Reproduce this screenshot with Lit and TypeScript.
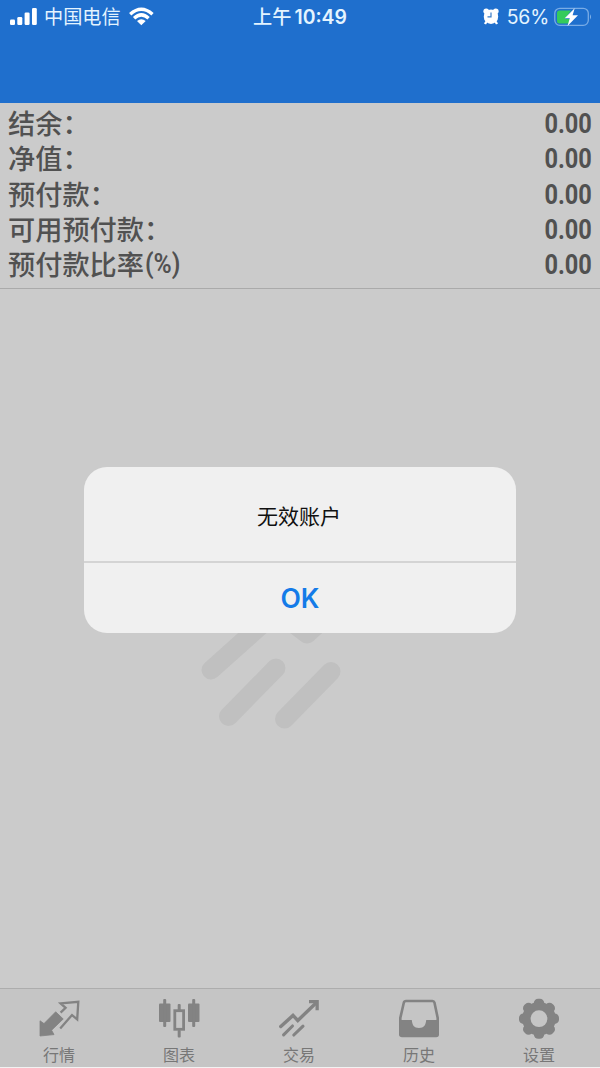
import { LitElement, html, svg, css } from "lit";
import { customElement, property } from "lit/decorators.js";

const icons: Record<string, unknown> = {
  quotes: svg`
    <path d="M1 21.8 5 24.6 16.7 12.8 24.2 20 12.6 31.2 15 35.6 1 37Z" fill="currentColor" stroke="currentColor" stroke-width=".8" stroke-linejoin="round"/>
    <path d="M21.6 13.6 26.6 8.8 21.6 4.3 39.3 2.8 38.2 20.4 33 16 21.2 29.6" fill="none" stroke="currentColor" stroke-width="2.3"/>`,
  charts: svg`
    <g fill="currentColor">
      <rect x="0" y="4.5" width="11.5" height="18.5" rx="1"/><rect x="4.2" y="0" width="3" height="28" rx="1"/>
      <rect x="29" y="4.5" width="11.5" height="18.5" rx="1"/><rect x="33.2" y="0" width="3" height="28" rx="1"/>
      <rect x="18.7" y="5" width="3" height="7" rx="1"/><rect x="18.7" y="31" width="3" height="7.5" rx="1"/>
    </g>
    <rect x="15.8" y="11.7" width="8.8" height="18.6" fill="none" stroke="currentColor" stroke-width="2.8"/>`,
  trade: svg`
    <g fill="none" stroke="currentColor" stroke-width="3.1" stroke-linecap="round">
      <path d="M1.8 27.5 14 16.4 18.8 21.5 37 4" stroke-width="3.4"/>
      <path d="M4.6 35.8 13.5 27M14.8 36 24 27.2"/>
    </g>
    <path d="M30 1H39.8V11.3H36.5V4.3H30Z" fill="currentColor"/>`,
  history: svg`
    <path d="M7 2H33.5Q35 2 35.5 3.7L38.7 19V35.5Q38.7 37 37.2 37H3Q1.3 37 1.3 35.5V19L4.8 3.7Q5.2 2 7 2Z" fill="none" stroke="currentColor" stroke-width="2.6"/>
    <path d="M1 21H12.8C13.2 26 15 29 20 29S26.8 26 27.2 21H39V37H1Z" fill="currentColor"/>`,
  settings: svg`
    <g fill="currentColor">
      ${[0, 45, 90, 135].map(
        (a) => svg`<rect x="14.8" y="-.3" width="10.4" height="40" rx="4.4" transform="rotate(${a} 20 19.7)"/>`
      )}
    </g>
    <circle cx="20" cy="19.7" r="12.8" fill="none" stroke="currentColor" stroke-width="8"/>
    <circle cx="20" cy="19.7" r="8.4" fill="#c5c5c5"/>`,
};

@customElement("status-bar")
class StatusBar extends LitElement {
  static styles = css`
    :host {
      display: grid;
      grid-template-columns: 1fr auto 1fr;
      align-items: center;
      height: 32px;
      padding: 0 9px 0 10px;
      color: #e4f4ff;
      font: 19.2px/34px Inter, "Noto Sans CJK SC", sans-serif;
    }
    .side { display: flex; align-items: center; }
    .right { justify-content: flex-end; }
    .carrier { margin: 0 8px 0 6px; }
    .time { display: flex; gap: 3px; margin-right: 1px; font-weight: 500; }
    .time b { font-weight: 600; font-size: 19.4px; }
    .battery { margin-left: 5px; }
    .percent { margin-left: 8px; font-size: 19.4px; letter-spacing: -0.2px; }
    svg { display: block; margin-top: -1px; }
  `;
  render() {
    return html`
      <div class="side">
        <svg width="28" height="18" fill="#fff">
          <rect x="0" y="11.5" width="5" height="5.5" rx="1.3"/><rect x="7.3" y="9" width="5" height="8" rx="1.3"/>
          <rect x="14.6" y="4.5" width="5" height="12.5" rx="1.3"/><rect x="22" y="0" width="4.8" height="17" rx="1.3"/>
        </svg>
        <span class="carrier">中国电信</span>
        <svg width="25" height="19" fill="none" stroke="#fff" stroke-width="3.4">
          <path d="M1.2 7.2Q12.3-2.8 23.5 7.2M5.1 11.2Q12.3 4.600 19.6 11.2"/>
          <path d="M8 14Q12.3 10.4 16.7 14L12.3 18.3Z" fill="#fff" stroke="none"/>
        </svg>
      </div>
      <div class="time"><span>上午</span><b>10:49</b></div>
      <div class="side right">
        <svg width="16" height="17">
          <g fill="#fff"><circle cx="3.2" cy="3.2" r="2.8"/><circle cx="12.8" cy="3.2" r="2.8"/><circle cx="8" cy="8.7" r="7.2"/></g>
          <path d="M3.5 13.500 2 16M12.5 13.5 14 16" stroke="#fff" stroke-width="2.4"/>
          <path d="M8 4.4V8.8H4.5" fill="none" stroke="#397cc8" stroke-width="1.2"/>
        </svg>
        <span class="percent">56%</span>
        <svg class="battery" width="37" height="20">
          <rect x=".8" y="1.3" width="33.5" height="17" rx="5" fill="none" stroke="#79ace6" stroke-width="1.3"/>
          <path d="M5.5 3.5H17L11 12H16L15 16.5H5.5Q3 16.5 3 14V6Q3 3.5 5.5 3.5Z" fill="#35cb5b"/>
          <path d="M36 7.2Q38.2 9.8 36 12.4Z" fill="#79ace6"/>
          <path d="M20.7 1.2 10.7 11.2H15.8L13.5 19 24 8.2H18.6Z" fill="#fff"/>
        </svg>
      </div>`;
  }
}

@customElement("account-row")
class AccountRow extends LitElement {
  @property() label = "";
  @property() suffix = "";
  @property() value = "";
  static styles = css`
    :host {
      display: flex;
      height: 35.25px;
      color: #515151;
      font: 500 27.2px/35.25px "Noto Sans CJK SC", sans-serif;
    }
    .label { display: block; }
    .narrow {
      display: block;
      margin-left: auto;
      padding-top: 2px;
      font: 700 26.8px/35.25px Roboto, sans-serif;
      transform: scaleX(0.88);
      transform-origin: right;
    }
    .suffix { margin-left: 1px; padding-top: 1px; font-weight: 600; transform: scaleX(0.92); transform-origin: left; }
  `;
  render() {
    return html`<span class="label">${this.label}</span>
      ${this.suffix ? html`<span class="narrow suffix">${this.suffix}</span>` : ""}
      <span class="narrow">${this.value}</span>`;
  }
}

@customElement("tab-item")
class TabItem extends LitElement {
  @property() icon = "";
  @property() label = "";
  static styles = css`
    :host {
      display: flex;
      flex: 1;
      flex-direction: column;
      align-items: center;
      padding-top: 10px;
      color: #838383;
      font: 16px/24px "Noto Sans CJK SC", sans-serif;
    }
    .label { margin-top: 3px; padding-right: 2px; color: #777; }
    svg { display: block; margin-right: 1px; }
  `;
  render() {
    return html`<svg width="41" height="40" overflow="visible">${icons[this.icon]}</svg><span class="label">${this.label}</span>`;
  }
}

@customElement("app-root")
class AppRoot extends LitElement {
  static styles = css`
    :host {
      position: relative;
      display: flex;
      flex-direction: column;
      width: 600px;
      height: 1068px;
      overflow: hidden;
      background: #cbcbcb;
    }
    .header { height: 103px; background: #1f6fcd; }
    .account { height: 183px; padding: 2px 8px 0; border-bottom: 1px solid #aaa; }
    .body { flex: 1; }
    .mark { position: absolute; left: 180px; top: 560px; }
    .tabs {
      display: flex;
      height: 78px;
      border-top: 1px solid #adadad;
      border-bottom: 1px solid #f2f2f2;
      background: #c5c5c5;
    }
    .dialog {
      position: absolute;
      left: 84px;
      top: 467px;
      display: flex;
      flex-direction: column;
      width: 432px;
      height: 166px;
      border-radius: 23px;
      overflow: hidden;
      background: #f0f0f0;
      text-align: center;
    }
    .message {
      height: 94px;
      padding-right: 2px;
      border-bottom: 2px solid #d4d4d4;
      color: #111;
      font: 21px/96px "Noto Sans CJK SC", sans-serif;
    }
    .ok {
      flex: 1;
      border: 0;
      padding: 0;
      background: none;
      color: #147be8;
      font: 600 26.5px/70px Inter, sans-serif;
    }
  `;
  render() {
    return html`
      <header class="header"><status-bar></status-bar></header>
      <section class="account">
        <account-row label="结余：" value="0.00"></account-row>
        <account-row label="净值：" value="0.00"></account-row>
        <account-row label="预付款：" value="0.00"></account-row>
        <account-row label="可用预付款：" value="0.00"></account-row>
        <account-row label="预付款比率" suffix="(%)" value="0.00"></account-row>
      </section>
      <main class="body">
        <svg class="mark" width="220" height="180" fill="none" stroke="#c0c0c0" stroke-width="19" stroke-linecap="round" stroke-linejoin="round">
          <path d="M31 110 97 51 127 74 200 8M48.5 156.5 96 108M104.5 159 151 111.500"/>
        </svg>
      </main>
      <nav class="tabs">
        <tab-item icon="quotes" label="行情"></tab-item>
        <tab-item icon="charts" label="图表"></tab-item>
        <tab-item icon="trade" label="交易"></tab-item>
        <tab-item icon="history" label="历史"></tab-item>
        <tab-item icon="settings" label="设置"></tab-item>
      </nav>
      <div class="dialog" role="alertdialog">
        <div class="message">无效账户</div>
        <button class="ok">OK</button>
      </div>`;
  }
}
